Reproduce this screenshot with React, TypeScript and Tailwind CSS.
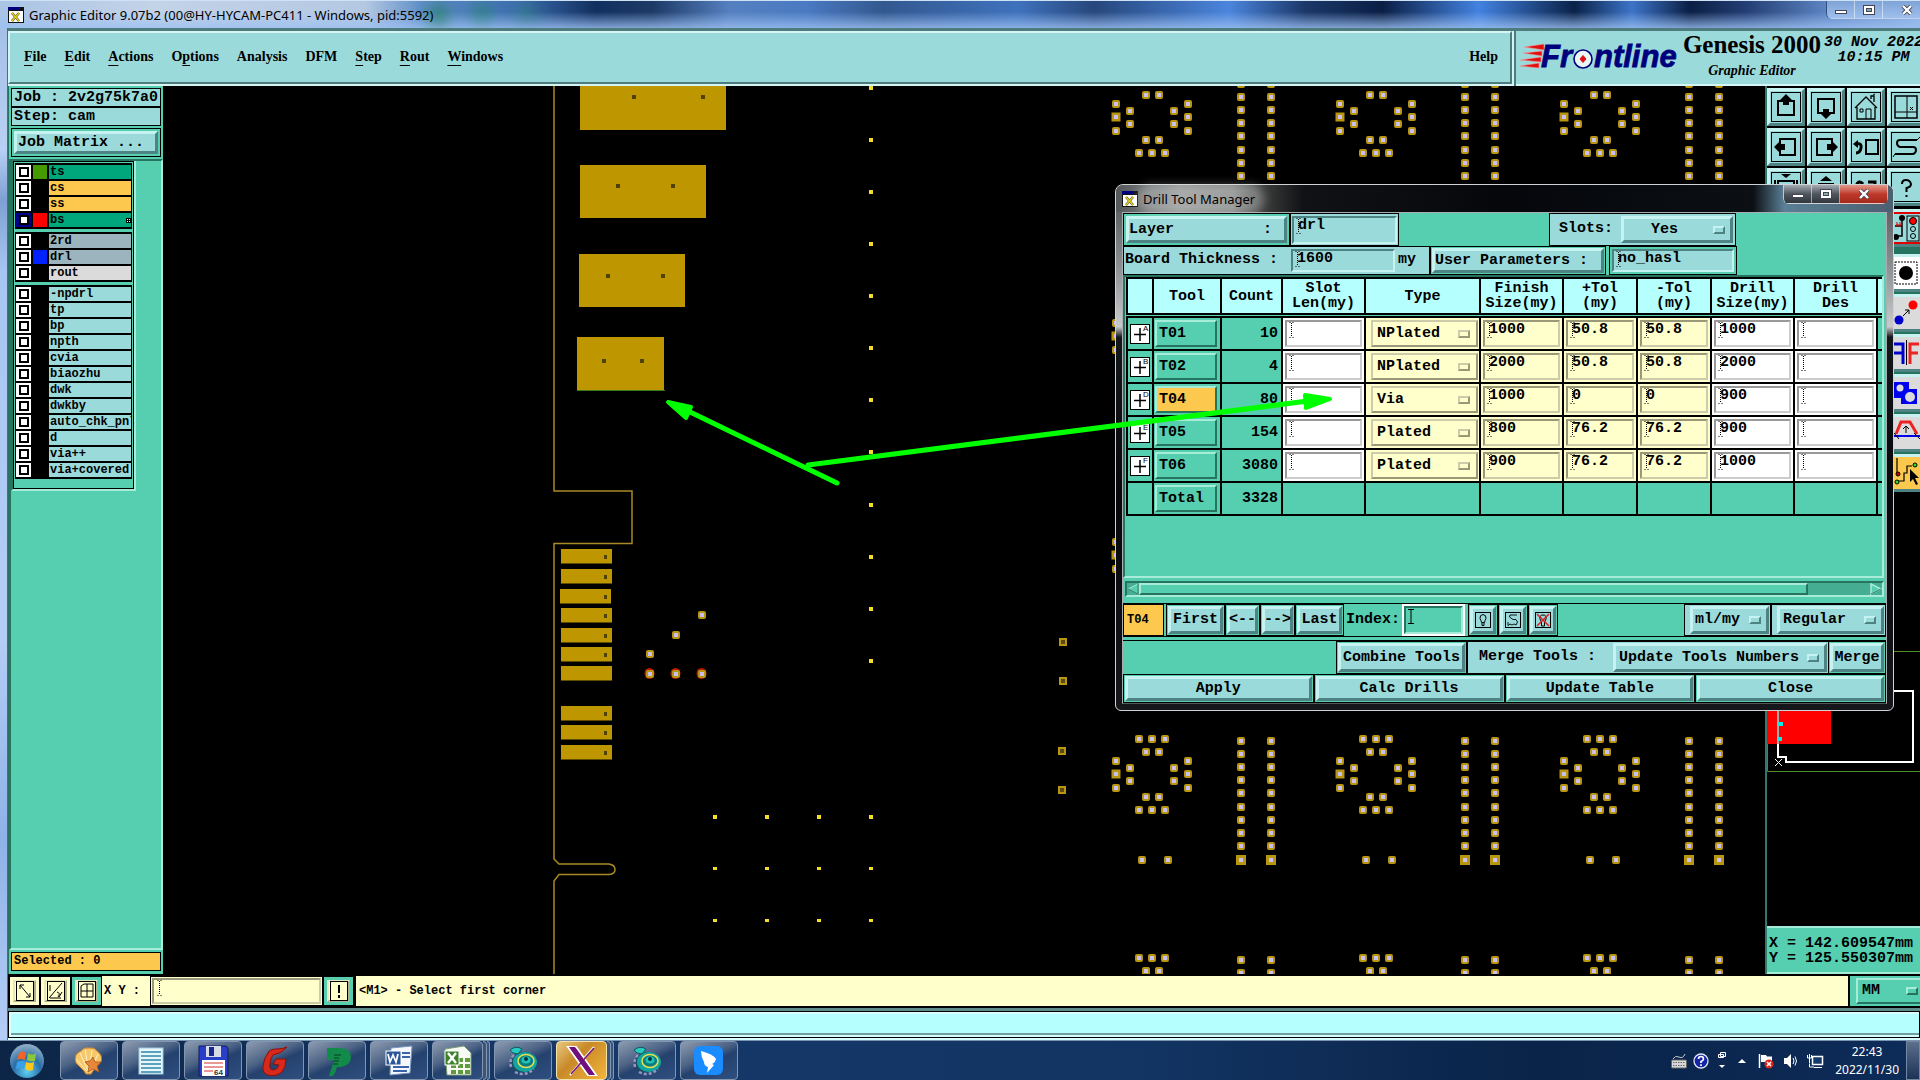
import type { ReactNode } from "react";

const MONO = "font-['Liberation_Mono','DejaVu_Sans_Mono',monospace] font-bold";
const SERIF = "font-['Liberation_Serif',serif] font-bold";
const UI = "font-['Noto_Sans','Open_Sans',sans-serif]";

const RAISED = "border-[3px] border-t-[#c6f3f2] border-l-[#c6f3f2] border-r-[#4d8483] border-b-[#4d8483] bg-[#9bdada]";
const TEAL_RAISED = "border-2 border-t-[#a6ecd9] border-l-[#a6ecd9] border-r-[#26735f] border-b-[#26735f]";
const TEAL_SUNKEN = "border-2 border-t-[#26735f] border-l-[#26735f] border-r-[#a6ecd9] border-b-[#a6ecd9]";

const MENUS = [
  ["", "F", "ile"],
  ["", "E", "dit"],
  ["", "A", "ctions"],
  ["O", "p", "tions"],
  ["Analysis", "", ""],
  ["DFM", "", ""],
  ["", "S", "tep"],
  ["", "R", "out"],
  ["", "W", "indows"],
];

type Layer = { name: string; bg: string; swatch?: string; active?: boolean };

const LAYERS: Layer[][] = [
  [
    { name: "ts", bg: "bg-[#00a67c]", swatch: "bg-[#459a00]" },
    { name: "cs", bg: "bg-[#fdc84e]" },
    { name: "ss", bg: "bg-[#fdc84e]" },
    { name: "bs", bg: "bg-[#00a67c]", swatch: "bg-[#ff0000]", active: true },
  ],
  [
    { name: "2rd", bg: "bg-[#9bb4be]" },
    { name: "drl", bg: "bg-[#9bb4be]", swatch: "bg-[#0022ff]" },
    { name: "rout", bg: "bg-[#dbdbdb]" },
  ],
  [
    "-npdrl", "tp", "bp", "npth", "cvia", "biaozhu", "dwk", "dwkby",
    "auto_chk_pnl", "d", "via++", "via+covered",
  ].map((name) => ({ name, bg: "bg-[#9bdada]" })),
];

const TOOLS = [
  { sym: "A", id: "T01", count: 10, type: "NPlated", finish: "1000", plus: "50.8", minus: "50.8", drill: "1000" },
  { sym: "B", id: "T02", count: 4, type: "NPlated", finish: "2000", plus: "50.8", minus: "50.8", drill: "2000" },
  { sym: "D", id: "T04", count: 80, type: "Via", finish: "1000", plus: "0", minus: "0", drill: "900" },
  { sym: "E", id: "T05", count: 154, type: "Plated", finish: "800", plus: "76.2", minus: "76.2", drill: "900" },
  { sym: "F", id: "T06", count: 3080, type: "Plated", finish: "900", plus: "76.2", minus: "76.2", drill: "1000" },
];

const HEADS = [
  ["Tool"], ["Count"], ["Slot", "Len(my)"], ["Type"], ["Finish", "Size(my)"],
  ["+Tol", "(my)"], ["-Tol", "(my)"], ["Drill", "Size(my)"], ["Drill", "Des"],
];

function IBeam() {
  return (
    <svg width="5" height="16" className="shrink-0" aria-hidden>
      <path d="M0.5 .5h1M3.5 .5h1M0.5 15.5h1M3.5 15.5h1" stroke="#000" />
      <path d="M2.5 1v14" stroke="#000" strokeDasharray="1 1" />
    </svg>
  );
}

function Field({ label, value = "", tone }: { label: string; value?: string; tone: "white" | "cream" | "cyan" }) {
  const look =
    tone === "white"
      ? "bg-white border-t-[#999] border-l-[#999] border-r-[#ccc] border-b-[#ccc]"
      : tone === "cream"
        ? "bg-[#ffffcc] border-t-[#99997a] border-l-[#99997a] border-r-[#ccccaa] border-b-[#ccccaa]"
        : "bg-[#9bdada] border-t-[#4d8483] border-l-[#4d8483] border-r-[#c6f3f2] border-b-[#c6f3f2]";
  return (
    <div className={`flex h-full w-full items-start border-2 pl-[2px] ${look}`}>
      <IBeam />
      <input
        aria-label={label}
        defaultValue={value}
        className={`${MONO} -ml-[3px] h-4 w-full min-w-0 bg-transparent text-[15px] leading-4 outline-none`}
      />
    </div>
  );
}

function Notch({ className = "" }: { className?: string }) {
  return <span className={`pointer-events-none absolute top-1/2 h-2 w-3 -translate-y-1/2 border-2 ${className}`} />;
}

function Menu({ label, value, className = "", pad = "pl-1" }: { label: string; value: string; className?: string; pad?: string }) {
  return (
    <div className={`relative ${className}`}>
      <select
        aria-label={label}
        defaultValue={value}
        className={`${MONO} ${RAISED} ${pad} block h-full w-full appearance-none rounded-none text-[15px] leading-4 outline-none`}
      >
        <option>{value}</option>
      </select>
      <Notch className="right-2 border-t-[#c6f3f2] border-l-[#c6f3f2] border-r-[#4d8483] border-b-[#4d8483]" />
    </div>
  );
}

function Btn({ children, className = "", align = "justify-center" }: { children: ReactNode; className?: string; align?: string }) {
  return (
    <div className={`border border-black bg-[#55cfb0] p-px ${className}`}>
      <button className={`${MONO} ${RAISED} ${align} flex h-full w-full items-center whitespace-nowrap text-[15px] leading-4`}>
        {children}
      </button>
    </div>
  );
}

function AppIcon() {
  return (
    <svg width="16" height="16" viewBox="0 0 16 16" className="shrink-0" aria-hidden>
      <rect width="16" height="16" fill="#111" />
      <rect width="11" height="3" fill="#00007c" />
      <rect x="1" y="4" width="14" height="11" fill="#fff" />
      <path d="M4 6l7 8M11 6l-7 8" stroke="#333" strokeWidth="2.4" />
      <path d="M4 6l7 8M11 6l-7 8" stroke="#e2d21c" strokeWidth="1.5" />
    </svg>
  );
}

function CaptionButtons({ dialog = false }: { dialog?: boolean }) {
  const h = dialog ? "h-[19px]" : "h-[18px]";
  const base = "flex items-center justify-center border-r border-b border-white/50 bg-gradient-to-b";
  const tone = dialog ? "from-[#a5adb4] via-[#50565d] to-[#31373d]" : "from-[#7fa3d6] to-[#9fc0ee]";
  return (
    <div className={`flex self-start overflow-hidden ${dialog ? "rounded-b-md border-l border-white/60" : "rounded-bl-md border-l border-[#32507c]"}`}>
      <button aria-label="Minimize" className={`${base} ${tone} ${h} w-7`}>
        <span className="mt-1 h-1 w-3 border border-[#445] bg-white" />
      </button>
      <button aria-label="Maximize" className={`${base} ${tone} ${h} w-7`}>
        <span className="flex h-[10px] w-3 items-center justify-center border border-[#445] bg-white">
          <span className="h-1 w-[6px] border border-[#445] bg-[#8aa]" />
        </span>
      </button>
      <button
        aria-label="Close window"
        className={`${base} ${h} w-12 ${dialog ? "from-[#e0988c] via-[#c0392b] to-[#a32a1c]" : tone}`}
      >
        <svg width="12" height="10" viewBox="0 0 12 10">
          <path d="M2 1l8 8M10 1L2 9" stroke="#445" strokeWidth="4" />
          <path d="M2 1l8 8M10 1L2 9" stroke="#fff" strokeWidth="2.4" />
        </svg>
      </button>
    </div>
  );
}

function TitleBar() {
  return (
    <div className="relative flex h-7 shrink-0 items-center overflow-hidden border-t border-[#cfe2f5] bg-[linear-gradient(90deg,#a9c4e4_0%,#c3d3e8_8%,#b4c8e2_19%,#5f8ec8_22%,#3d6db0_27%,#12305f_31%,#1d3a66_34%,#5580c0_38%,#4a7ac2_42%,#33588f_46%,#3f72bd_53%,#27477c_57%,#4b85dd_64%,#1b3768_68%,#0b1f45_72%,#4382e0_77%,#0a2248_82%,#3d74c8_85%,#0b1f45_88%,#243f75_91%,#5b82c0_95%,#8fb1e4_100%)] pl-2">
      <div className="absolute inset-0 bg-gradient-to-b from-transparent from-40% to-[#9cc0f2]/80" />
      <div className="absolute left-[428px] top-1 h-5 w-5 rounded-full bg-[#0d7a3a]/70 blur-sm" />
      <div className="absolute left-[472px] top-1 h-4 w-5 rounded-full bg-[#128a48]/60 blur-sm" />
      <div className="absolute left-[514px] top-1 h-4 w-6 rounded-full bg-[#2b8a6a]/50 blur-sm" />
      <div className="relative flex w-full items-center">
        <AppIcon />
        <h1 className={`${UI} ml-[5px] flex-1 text-[13px] leading-[22px] text-black`}>
          Graphic Editor 9.07b2 (00@HY-HYCAM-PC411 - Windows, pid:5592)
        </h1>
      </div>
      <div className="absolute -right-[11px] top-0">
        <CaptionButtons />
      </div>
    </div>
  );
}

function FrontlineLogo() {
  return (
    <svg width="162" height="36" viewBox="0 0 162 36" role="img" aria-label="Frontline">
      <g fill="#e01010" stroke="#f2a0a0" strokeWidth=".6">
        <path d="M4 7L24 4v6z" />
        <path d="M3 13L22 11v5z" />
        <path d="M0 20L21 17v5z" />
        <path d="M0 26L19 23v5z" />
      </g>
      <g className="font-['Liberation_Sans',sans-serif] text-[31px] font-bold italic" fill="#00007c" stroke="#00007c" strokeWidth=".8">
        <text x="21" y="27">Fr</text>
        <text x="74" y="27">ntline</text>
      </g>
      <circle cx="63" cy="19" r="9" fill="#e8f6f6" stroke="#00007c" strokeWidth="1.6" />
      <path d="M63 15.500l3 3.500-3 3.500-3-3.500z" fill="#e01010" stroke="#e01010" />
    </svg>
  );
}

function Header() {
  return (
    <header className="flex h-[58px] shrink-0 border-t-[3px] border-[#4e7c7c] bg-[#4e7c7c]">
      <div className="flex flex-1 border-r-2 border-b-2 border-[#d5f5f5]">
        <nav className={`${SERIF} flex flex-1 items-center gap-[18px] border-2 border-t-[#d5f5f5] border-l-[#d5f5f5] border-r-[#4e7c7c] border-b-[#4e7c7c] bg-[#9bdada] pr-3 pb-[2px] pl-[14px] text-sm`}>
          {MENUS.map(([a, u, b]) => (
            <button key={a + u + b} className="underline-offset-4">
              {a}
              <span className="underline decoration-1">{u}</span>
              {b}
            </button>
          ))}
          <button className="ml-auto">Help</button>
        </nav>
      </div>
      <div className="ml-[2px] flex w-[404px] overflow-hidden border-b-2 border-[#d5f5f5] bg-[#9bdada] pl-1">
        <div className="shrink-0 pt-[9px]">
          <FrontlineLogo />
        </div>
        <div className={`${SERIF} w-[140px] shrink-0 text-center`}>
          <div className="text-[25px] leading-7">Genesis 2000</div>
          <div className="text-sm leading-6 italic">Graphic Editor</div>
        </div>
        <div className={`${MONO} ml-[2px] shrink-0 pt-1 text-center text-[15px] leading-[15px] italic`}>
          <div>30 Nov 2022</div>
          <div>10:15 PM</div>
        </div>
      </div>
    </header>
  );
}

function LayerRow({ layer }: { layer: Layer }) {
  return (
    <label className="flex h-4 items-center gap-[2px]">
      <span className={`flex h-[14px] w-[15px] items-center justify-center ${layer.active ? "bg-[#00008c]" : "bg-white"}`}>
        <input type="checkbox" className="size-[10px] appearance-none border-2 border-black bg-white" />
      </span>
      <span className={`h-[14px] w-[14px] ${layer.swatch ?? "bg-black"}`} />
      <span className={`${MONO} ${layer.bg} flex h-[14px] flex-1 items-center overflow-hidden pl-px text-xs leading-[14px] whitespace-nowrap`}>
        {layer.name}
        {layer.active && (
          <svg width="5" height="5" className="ml-auto" aria-hidden>
            <path d="M0 0h5v5H0z" fill="#000" />
            <path d="M1 1h1v1H1zM3 1h1v1H3zM1 3h1v1H1zM3 3h1v1H3z" fill="#fff" />
          </svg>
        )}
      </span>
    </label>
  );
}

function Sidebar() {
  return (
    <aside className="flex w-[155px] shrink-0 flex-col border-l border-[#26735f] bg-[#55cfb0]">
      <div className={`${MONO} mx-[2px] mt-[2px] text-[15px] leading-[17px]`}>
        <div className="border border-black bg-[#9bdada] pl-[2px] whitespace-nowrap">Job : 2v2g75k7a0</div>
        <div className="border border-black bg-[#9bdada] pl-[2px]">Step: cam</div>
      </div>
      <div className="mx-[2px] mt-[2px] border border-black p-[2px]">
        <button className={`${MONO} ${RAISED} block h-[23px] w-full pl-px text-left text-[15px] leading-4`}>Job Matrix ...</button>
      </div>
      <div className={`${TEAL_SUNKEN} mt-[2px] flex-1`}>
        <div className="w-[125px] border-r-2 border-b-2 border-l-2 border-l-[#26735f] border-r-[#a6ecd9] border-b-[#a6ecd9]">
          <div className="flex flex-col gap-[3px] border border-black px-px pt-px pb-[9px]">
            {LAYERS.map((group, i) => (
              <div key={i} className="border border-black bg-black">
                {group.map((layer) => (
                  <LayerRow key={layer.name} layer={layer} />
                ))}
              </div>
            ))}
          </div>
        </div>
      </div>
      <div className={`${MONO} mx-[2px] mt-[2px] mb-[3px] border border-black bg-[#fdc84e] pl-[2px] text-xs leading-[17px]`}>
        Selected : 0
      </div>
    </aside>
  );
}

function Pad({ x, y, size = 8, halo = false }: { x: number; y: number; size?: number; halo?: boolean }) {
  return (
    <g>
      {halo && <ellipse cx={x - 0.5} cy={y - 0.5} rx="5" ry="5.500" fill="#c21800" />}
      <rect x={x - size / 2} y={y - size / 2} width={size} height={size} rx={size > 8 ? 0 : 2} fill="#b8960f" />
      <rect x={x - 2} y={y - 2} width="4" height="4" fill="#cabff2" />
    </g>
  );
}

const RING = [
  [1139, 739], [1152, 739], [1165, 739], [1146, 752], [1159, 752],
  [1116, 761], [1116, 788], [1130, 768], [1130, 781],
  [1174, 768], [1174, 781], [1188, 761], [1188, 774], [1188, 788],
  [1146, 797], [1159, 797], [1139, 810], [1152, 810], [1165, 810],
  [1142, 860], [1168, 860],
];
const COLUMN_Y = [741, 754, 767, 780, 793, 807, 820, 833, 846];

function Cluster() {
  return (
    <>
      {RING.map(([x, y]) => <Pad key={`${x}-${y}`} x={x} y={y} />)}
      <Pad x={1116} y={774} size={9} />
      {[1241, 1271].map((x) => (
        <g key={x}>
          {COLUMN_Y.map((y) => <Pad key={y} x={x} y={y} />)}
          <Pad x={x} y={860} size={10} />
        </g>
      ))}
    </>
  );
}

const BIG_PADS = [
  { x: 580, y: 80, w: 146, h: 50, holes: [[634, 97], [703, 97]] },
  { x: 580, y: 165, w: 126, h: 53, holes: [[618, 186], [673, 186]] },
  { x: 579, y: 254, w: 106, h: 53, holes: [[608, 276], [663, 276]] },
  { x: 577, y: 337, w: 87, h: 53, holes: [[604, 361], [642, 361]] },
];
const FINGERS = [549, 569, 589, 608, 628, 647, 666, 706, 725, 745];
const DOT_Y = [88, 140, 192, 244, 296, 348, 400, 452, 505, 557, 609, 661];

function Board() {
  return (
    <svg viewBox="163 86 1602 888" preserveAspectRatio="xMinYMin slice" className="absolute inset-0 h-full w-full" aria-hidden>
      <path
        d="M554 80V491H632V543.500H554V859L559 864H609Q615 865 615 869.500T609 874.500H559L554 881V980"
        fill="none"
        stroke="#a98a26"
        strokeWidth="1.500"
      />
      {BIG_PADS.map((p) => (
        <g key={p.y}>
          <rect x={p.x} y={p.y} width={p.w} height={p.h} fill="#be9700" />
          {p.holes.map(([x, y]) => <rect key={x} x={x - 2} y={y - 2} width="4" height="4" fill="#4f4208" />)}
        </g>
      ))}
      <path d="M577 390.500H665" stroke="#3c7a1e" />
      {FINGERS.map((y) => (
        <g key={y}>
          <rect x={y === 589 ? 560 : 561} y={y} width="51" height="14.500" fill="#be9700" />
          {y !== 666 && <rect x="604" y={y + 6} width="3" height="4" fill="#4f4208" />}
        </g>
      ))}
      {DOT_Y.map((y) => <rect key={y} x="869" y={y - 2} width="4" height="4" fill="#f2dc2e" />)}
      {[715, 767, 819, 871].map((x) =>
        [817, 869, 921].map((y) => <rect key={`${x}-${y}`} x={x - 2} y={y - 2} width="4" height={y === 817 ? 4 : 3} fill="#f2dc2e" />)
      )}
      <Pad x={702} y={615} />
      <Pad x={676} y={635} />
      <Pad x={650} y={654} />
      <Pad x={650} y={674} halo />
      <Pad x={676} y={674} halo />
      <Pad x={702} y={674} halo />
      {[[1063, 642], [1063, 681], [1062, 751], [1062, 790]].map(([x, y]) => (
        <g key={y}>
          <rect x={x - 4} y={y - 4} width="8" height="8" fill="#b8960f" />
          <rect x={x - 2} y={y - 2} width="4" height="4" fill="#5a4a18" />
        </g>
      ))}
      {[0, 224, 448].map((dx) =>
        [-657, -438, -219, 0, 219].map((dy) => (
          <g key={`${dx}${dy}`} transform={`translate(${dx} ${dy})`}>
            <Cluster />
          </g>
        ))
      )}
    </svg>
  );
}

function ToolIcon({ children, bg = "bg-[#9bdada]", frame = true, label }: { children?: ReactNode; bg?: string; frame?: boolean; label: string }) {
  return (
    <button
      aria-label={label}
      className={`size-[38px] shrink-0 border-[3px] border-t-[#c6f3f2] border-l-[#c6f3f2] border-r-[#4d8483] border-b-[#4d8483] ${bg}`}
    >
      <svg width="32" height="32" viewBox="3 3 32 32" fill="none" stroke="#000" strokeWidth="2">
        {frame && <rect x="4.500" y="4.500" width="29" height="29" strokeWidth="1" />}
        {children}
      </svg>
    </button>
  );
}

const SIDE_ICONS = [
  {
    label: "Move",
    bg: "bg-[#dbdbdb]",
    art: (
      <>
        <circle cx="12" cy="26" r="4.500" fill="#00c" stroke="none" />
        <circle cx="26" cy="11" r="4.500" fill="#f00" stroke="none" />
        <path d="M16 22l6-6M18 16h4v4" strokeWidth="1" />
      </>
    ),
  },
  {
    label: "Mirror",
    bg: "bg-[#dbdbdb]",
    art: (
      <>
        <path d="M7 10H16V30M7 19H16" stroke="#00c" strokeWidth="3" />
        <path d="M19.500 6V31" strokeWidth="1" />
        <path d="M32 10H23V30M23 19H31" stroke="#e22" strokeWidth="3" />
      </>
    ),
  },
  {
    label: "Shapes",
    bg: "bg-[#dbdbdb]",
    art: (
      <>
        <path d="M6 8H22V15H30V30H14V24H6Z" fill="#00e" stroke="none" />
        <circle cx="13" cy="14" r="3.500" fill="#dbdbdb" stroke="none" />
        <circle cx="23" cy="23" r="5" fill="#dbdbdb" stroke="none" />
      </>
    ),
  },
  {
    label: "Stretch",
    bg: "bg-[#dbdbdb]",
    art: (
      <>
        <path d="M9 20L14 8H23L30 20" stroke="#e22" strokeWidth="3" />
        <path d="M4 22H34" stroke="#00e" />
        <path d="M19 19V12M16 15l3-3 3 3" strokeWidth="1" />
        <path d="M7 19l5 6M27 19l6 6" strokeWidth="1" />
      </>
    ),
  },
  {
    label: "Select",
    bg: "bg-[#fdc84e]",
    art: (
      <>
        <path d="M10 4V19M10 27H17V19H20V12H25" strokeWidth="1.200" />
        <circle cx="11" cy="20" r="2" fill="#c00" strokeWidth="1" />
        <circle cx="10" cy="28" r="2" fill="#3d3" strokeWidth="1" />
        <circle cx="28" cy="11" r="2" fill="#3d3" strokeWidth="1" />
        <path d="M23 15v13l3-3 3 6 2-1-3-6h4z" fill="#000" stroke="none" />
      </>
    ),
  },
];

function RightPanel() {
  return (
    <aside className="relative flex w-[155px] shrink-0 flex-col overflow-hidden border-l-2 border-[#2f7a6a] bg-black">
      <div className="flex w-[158px] flex-col gap-[3px] pt-[2px]">
        <div className="grid grid-cols-4 gap-[2px]">
          <ToolIcon label="Pan up">
            <path d="M16 13H11V27H27V13H22" />
            <path d="M13 12l6-6 6 6h-3v5h-6v-5z" fill="#000" stroke="none" />
          </ToolIcon>
          <ToolIcon label="Pan down">
            <path d="M16 25H11V11H27V25H22" />
            <path d="M13 25l6 6 6-6h-3v-4h-6v4z" fill="#000" stroke="none" />
          </ToolIcon>
          <ToolIcon label="Home">
            <path d="M8 20L19 9L30 20M10 19V31H28V19M24 11V8H27V14" strokeWidth="1.300" />
            <path d="M19 31V21H24V31M13 21h3v3h-3zM26 7l2-1" strokeWidth="1" />
          </ToolIcon>
          <ToolIcon label="Window XY">
            <rect x="8" y="8" width="22" height="22" strokeWidth="1.500" />
            <path d="M20 8V30M8 24H30M23 19l3 3M26 19l-3 3" strokeWidth="1" />
          </ToolIcon>
          <ToolIcon label="Pan left">
            <path d="M13 16V11H28V27H13V22" />
            <path d="M13 13l-6 6 6 6v-3h5v-6h-5z" fill="#000" stroke="none" />
          </ToolIcon>
          <ToolIcon label="Pan right">
            <path d="M25 16V11H10V27H25V22" />
            <path d="M25 13l6 6-6 6v-3h-5v-6h5z" fill="#000" stroke="none" />
          </ToolIcon>
          <ToolIcon label="Previous view">
            <rect x="19" y="12" width="12" height="14" />
            <path d="M10 16Q15 15 14 20T9 25" strokeWidth="3" />
            <path d="M6 16l5-4v8z" fill="#000" stroke="none" />
          </ToolIcon>
          <ToolIcon label="Serpentine">
            <path d="M30 12H13Q10 12 10 15T13 19H26Q29 19 29 22T26 26H8" />
            <path d="M30 12l3-3M8 26l-2 3" strokeWidth="1" />
          </ToolIcon>
          <ToolIcon label="Zoom in">
            <path d="M11 28V13H27V28M8 12v6M30 12v6" />
            <path d="M14 6h10l-5 4z" fill="#000" stroke="none" />
          </ToolIcon>
          <ToolIcon label="Zoom out">
            <path d="M12 28V16H26V28" />
            <path d="M13 13h12l-6-5z" fill="#000" stroke="none" />
          </ToolIcon>
          <ToolIcon label="Redraw">
            <path d="M9 18Q12 11 16 16M21 14H28V24" strokeWidth="3" />
          </ToolIcon>
          <ToolIcon label="Help">
            <path d="M15 16Q15 12 19 12T24 16Q24 19 19.500 20V24" />
            <path d="M18.500 27h2v2h-2z" fill="#000" stroke="none" />
          </ToolIcon>
        </div>
        <div className="flex flex-col items-end gap-[2px] bg-[#26735f]">
          <ToolIcon label="Colors" frame={false}>
            <path d="M3 4H35M3 34H35" stroke="#e00000" />
            <path d="M15 8v19H8M8 17h7" strokeWidth="1.500" />
            <circle cx="15" cy="9" r="2" fill="#000" />
            <circle cx="9" cy="28" r="2" fill="#000" />
            <path d="M9 16h6M10 13v5M13 13v5" stroke="#e00000" strokeWidth="1" />
            <rect x="20" y="7" width="12" height="25" strokeWidth="1" />
            <circle cx="26" cy="12" r="3.500" fill="#f00" strokeWidth="1" />
            <circle cx="26" cy="20" r="2.500" strokeWidth="1" />
            <circle cx="26" cy="27" r="2.500" strokeWidth="1" />
          </ToolIcon>
          <div className="h-[3px]" />
          <ToolIcon label="Pad" bg="bg-white" frame={false}>
            <rect x="8" y="8" width="22" height="22" strokeWidth="1" strokeDasharray="2 1" />
            <circle cx="19" cy="19" r="7" fill="#000" stroke="none" />
          </ToolIcon>
          {SIDE_ICONS.map((icon) => (
            <ToolIcon key={icon.label} label={icon.label} bg={icon.bg} frame={false}>
              {icon.art}
            </ToolIcon>
          ))}
        </div>
      </div>
      <div className="min-h-0 flex-1">
        <svg width="153" height="430" viewBox="1767 492 153 430" className="block max-h-full" preserveAspectRatio="xMinYMin slice" aria-hidden>
          <path d="M1920 651.500H1767.500V771.500H1920" fill="none" stroke="#4c8a22" />
          <rect x="1767" y="690" width="64" height="54" fill="#f00" />
          <path d="M1778 744V691H1913V762H1786V757H1778V743" fill="none" stroke="#fff" strokeWidth="2" />
          <path d="M1778 692V744" stroke="#aaa" strokeWidth="2" />
          <path d="M1778 722h5v4h-5zM1778 737h4v4h-4z" fill="#10e8e8" />
          <path d="M1775 759l7 7M1782 759l-7 7" stroke="#fff" />
        </svg>
      </div>
      <div className={`${MONO} shrink-0 border-y-2 border-[#a6ecd9] bg-[#55cfb0] pt-2 pb-[6px] pl-[2px] text-[15px] leading-[15px] whitespace-pre`}>
        <div>X = 142.609547mm</div>
        <div>Y = 125.550307mm</div>
      </div>
    </aside>
  );
}

function DrillTable() {
  const cell = "border-2 border-black p-0";
  return (
    <table className={`${MONO} w-full table-fixed border-collapse text-[15px] leading-[15px]`}>
      <colgroup>
        <col className="w-[26px]" />
        <col className="w-[68px]" />
        <col className="w-[61px]" />
        <col className="w-[83px]" />
        <col className="w-[115px]" />
        <col className="w-[83px]" />
        <col className="w-[74px]" />
        <col className="w-[74px]" />
        <col className="w-[83px]" />
        <col className="w-[83px]" />
        <col />
      </colgroup>
      <thead>
        <tr className="h-9 bg-[#b5fffe]">
          <th className={cell} />
          {HEADS.map((lines) => (
            <th key={lines.join(" ")} className={`${cell} font-bold`}>
              {lines.map((l) => <div key={l}>{l}</div>)}
            </th>
          ))}
          <th className={`${cell} overflow-hidden border-r-0`} />
        </tr>
      </thead>
      <tbody>
        <tr className="h-[3px]">
          <td colSpan={11} className="p-0 text-[0px] leading-0" />
        </tr>
        {TOOLS.map((t) => (
          <tr key={t.id} className="h-[33px]">
            <td className={cell}>
              <svg width="20" height="20" viewBox="0 0 20 20" className="mx-auto" aria-hidden>
                <rect x=".5" y=".5" width="19" height="19" fill="#fff" stroke="#000" />
                <path d="M10 4V17M4 10.500H16" stroke="#000" strokeWidth="1.500" />
                <text x="13" y="7" fontSize="8" className="font-['Liberation_Sans',sans-serif] font-normal">{t.sym}</text>
              </svg>
            </td>
            <td className={cell}>
              <button className={`${TEAL_RAISED} ml-px block h-[27px] w-[62px] pl-[2px] text-left ${t.id === "T04" ? "bg-[#fdc84e]" : ""}`}>
                {t.id}
              </button>
            </td>
            <td className={`${cell} pr-[3px] text-right`}>{t.count}</td>
            <td className={`${cell} bg-white`}>
              <div className="h-[31px] p-[2px]"><Field tone="white" label={`${t.id} slot length`} /></div>
            </td>
            <td className={`${cell} bg-[#ffffcc]`}>
              <div className="relative h-[31px] py-[2px] pr-px pl-[5px]">
                <select
                  aria-label={`${t.id} type`}
                  defaultValue={t.type}
                  className="h-full w-full appearance-none rounded-none border-2 border-t-[#ccccaa] border-l-[#ccccaa] border-r-[#99997a] border-b-[#99997a] pl-1 outline-none"
                >
                  <option>{t.type}</option>
                </select>
                <Notch className="right-[9px] border-t-[#ccccaa] border-l-[#ccccaa] border-r-[#99997a] border-b-[#99997a]" />
              </div>
            </td>
            {([["finish size", t.finish], ["plus tolerance", t.plus], ["minus tolerance", t.minus]] as const).map(([label, v]) => (
              <td key={label} className={`${cell} bg-[#ffffcc]`}>
                <div className="h-[31px] p-[2px]"><Field tone="cream" label={`${t.id} ${label}`} value={v} /></div>
              </td>
            ))}
            {([["drill size", t.drill], ["drill designation", ""]] as const).map(([label, v]) => (
              <td key={label} className={`${cell} bg-white`}>
                <div className="h-[31px] p-[2px]"><Field tone="white" label={`${t.id} ${label}`} value={v} /></div>
              </td>
            ))}
            <td className={`${cell} border-r-0`} />
          </tr>
        ))}
        <tr className="h-[33px]">
          <td className={cell} />
          <td className={cell}>
            <button className={`${TEAL_RAISED} ml-px block h-[27px] w-[62px] pl-[2px] text-left`}>Total</button>
          </td>
          <td className={`${cell} pr-[3px] text-right`}>3328</td>
          {[0, 1, 2, 3, 4, 5, 6].map((i) => <td key={i} className={cell} />)}
          <td className={`${cell} border-r-0`} />
        </tr>
      </tbody>
    </table>
  );
}

function SmallIcon({ label, children }: { label: string; children: ReactNode }) {
  return (
    <div className="w-[30px] border border-black bg-[#55cfb0] p-px">
      <button aria-label={label} className={`${RAISED} flex h-full w-full items-center justify-center`}>
        <svg width="16" height="16" viewBox="0 0 16 16" fill="none" stroke="#000">
          <rect x=".5" y=".5" width="15" height="15" />
          {children}
        </svg>
      </button>
    </div>
  );
}

function DrillToolManager() {
  return (
    <section
      aria-label="Drill Tool Manager"
      className="absolute top-[184px] left-[1115px] w-[779px] rounded-t-lg rounded-b-md border border-[#d0d3d6] bg-[linear-gradient(180deg,#4a4d50_0%,#8a8d90_15%,#c8cacc_27%,#15181b_29%,#05070a_60%,#15171a_100%)] px-[6px] pb-[6px]"
    >
      <div className="-mx-[6px] flex h-[27px] items-center rounded-t-lg bg-[linear-gradient(90deg,#55585a_0%,#8c8f8e_8%,#7d807f_15%,#3c3d3c_19%,#101215_24%,#05070b_50%,#0c0f14_82%,#5a7f96_86%,#4c5f70_100%)] pr-[5px] pl-[6px]">
        <AppIcon />
        <h2 className={`${UI} ml-[5px] flex-1 text-[13px] leading-5 text-black`}>
          <span className="rounded-full bg-white/25 pr-1 shadow-[0_0_8px_6px_rgba(255,255,255,0.25)]">Drill Tool Manager</span>
        </h2>
        <CaptionButtons dialog />
      </div>
      <div className="border border-[#a9aeb2] border-b-[#55585b] bg-[#55cfb0]">
        <div className="flex h-[33px]">
          <div className="w-[167px] border border-black p-[2px]">
            <button className={`${MONO} ${RAISED} flex h-full w-full items-center justify-between pr-3 text-[15px] leading-4`}>
              <span>Layer</span>
              <span>:</span>
            </button>
          </div>
          <div className="w-[109px] border border-black bg-[#9bdada] p-px pt-[2px]">
            <Field tone="cyan" label="Layer" value="drl" />
          </div>
          <div className={`${MONO} ml-[150px] flex w-[187px] items-center border border-black bg-[#9bdada] py-[2px] pr-[2px] pl-[9px] text-[15px]`}>
            Slots:
            <Menu label="Slots" value="Yes" pad="pl-[27px]" className="ml-2 h-full flex-1" />
          </div>
        </div>
        <div className={`${MONO} flex h-[29px] text-[15px]`}>
          <div className="flex w-[307px] items-center border border-black bg-[#9bdada] py-[2px] pl-px whitespace-pre">
            Board Thickness :
            <div className="ml-[13px] h-full w-[104px]">
              <Field tone="cyan" label="Board Thickness" value="1600" />
            </div>
            <span className="ml-[3px]">my</span>
          </div>
          <Btn className="w-[176px]" align="justify-start">User Parameters :</Btn>
          <div className="ml-[3px] w-[128px] border border-black p-[2px]">
            <Field tone="cyan" label="User Parameters" value="no_hasl" />
          </div>
        </div>
        <div className={`${TEAL_SUNKEN} mr-[2px] h-[303px] pl-px`}>
          <DrillTable />
        </div>
        <div className={`${TEAL_SUNKEN} mx-[2px] mt-[3px] flex h-4 items-center bg-[#45ad92]`}>
          <svg width="12" height="12" viewBox="0 0 12 12" aria-hidden>
            <path d="M11 1L1 6l10 5z" fill="#55cfb0" stroke="#a6ecd9" />
            <path d="M1 6l10 5V1" fill="none" stroke="#26735f" />
          </svg>
          <div className={`${TEAL_RAISED} h-3 w-[669px] bg-[#55cfb0]`} />
          <svg width="12" height="12" viewBox="0 0 12 12" className="ml-auto" aria-hidden>
            <path d="M1 1l10 5L1 11z" fill="#55cfb0" stroke="#a6ecd9" strokeWidth="1.500" />
            <path d="M11 6L1 11" stroke="#26735f" />
          </svg>
        </div>
        <div className={`${MONO} mt-[6px] flex h-[34px] border-y border-black text-[15px]`}>
          <div className="flex w-[41px] items-center border border-black bg-[#fdc84e] pl-[3px] text-xs">T04</div>
          <Btn className="ml-[2px] w-[59px]">First</Btn>
          <Btn className="w-[35px]">{"<--"}</Btn>
          <Btn className="w-[35px]">{"-->"}</Btn>
          <Btn className="w-[49px]">Last</Btn>
          <label htmlFor="tool-index" className="flex items-center px-[2px]">Index:</label>
          <div className="flex w-[63px] items-start border-2 border-white">
            <div className="flex h-full w-full border-2 border-t-[#26735f] border-l-[#26735f] border-r-[#a6ecd9] border-b-[#a6ecd9] pl-[2px]">
              <svg width="6" height="16" className="shrink-0" aria-hidden>
                <path d="M0 1.500h6M0 15.500h6M3 1v14" stroke="#000" />
              </svg>
              <input id="tool-index" className="w-full min-w-0 bg-transparent outline-none" />
            </div>
          </div>
          <div className="w-[3px]" />
          <SmallIcon label="Highlight tool">
            <path d="M8 2.500Q11.500 3 11 6.500Q10 8 9.500 10.500H6.500Q6 8 5 6.500Q4.500 3 8 2.500M7 11v2.500h2V11" />
          </SmallIcon>
          <SmallIcon label="Select tool">
            <path d="M12 3H5L4.500 5L8 7.500H11L12.500 10L11 13L9 12L7 13L5 12L3 13.500V10" strokeWidth=".9" />
          </SmallIcon>
          <SmallIcon label="Clear highlight">
            <path d="M8 3Q12 3 11 7L9.500 10V14H6.500V10L5 7Q4 3 8 3" />
            <path d="M2 2L14 14M14 2L2 14" stroke="#e02020" strokeWidth="1.500" />
          </SmallIcon>
          <div className="flex-1" />
          <div className="w-[87px] border border-black bg-[#9bdada] py-px pr-px pl-[5px]">
            <Menu label="Units" value="ml/my" className="h-full" pad="pl-[2px]" />
          </div>
          <div className="w-[115px] border border-black bg-[#9bdada] py-px pr-px pl-[5px]">
            <Menu label="Mode" value="Regular" className="h-full" pad="pl-[3px]" />
          </div>
        </div>
        <div className={`${MONO} mt-[3px] flex h-[34px] border-t border-black text-[15px]`}>
          <div className="flex-1" />
          <Btn className="w-[131px]">Combine Tools</Btn>
          <div className="flex w-[361px] items-center border-y border-l border-black bg-[#9bdada] py-px pr-px pl-[11px] whitespace-pre">
            Merge Tools :
            <Menu label="Merge Tools" value="Update Tools Numbers" className="ml-auto h-full w-[214px]" pad="pl-[3px]" />
          </div>
          <Btn className="w-[58px]">Merge</Btn>
        </div>
        <div className="flex h-[29px]">
          <Btn className="flex-1">Apply</Btn>
          <Btn className="flex-1">Calc Drills</Btn>
          <Btn className="flex-1">Update Table</Btn>
          <Btn className="flex-1">Close</Btn>
        </div>
      </div>
    </section>
  );
}

function Arrows() {
  return (
    <svg width="1920" height="1080" viewBox="0 0 1920 1080" className="pointer-events-none absolute top-0 left-0" aria-hidden>
      <g stroke="#00ff00" strokeWidth="5" strokeLinecap="round" strokeLinejoin="round" fill="#00ff00">
        <path d="M837 483L690 412" />
        <path d="M808 465L1308 401" />
        <path d="M668 402L691 407L686 418Z" strokeWidth="4" />
        <path d="M1330 399L1305 395L1306 408Z" strokeWidth="4" />
      </g>
    </svg>
  );
}

function StatusButton({ label, teal = false, children }: { label: string; teal?: boolean; children: ReactNode }) {
  return (
    <div className={`w-[31px] border border-black p-[3px] ${teal ? "bg-[#55cfb0]" : "bg-[#ffffcc]"}`}>
      <button
        aria-label={label}
        className="flex h-full w-full items-center justify-center border-2 border-t-[#e8e8bc] border-l-[#e8e8bc] border-r-[#b0b08c] border-b-[#b0b08c] bg-[#ffffcc]"
      >
        <svg width="18" height="20" viewBox="0 0 18 20" fill="none" stroke="#000">
          <rect x=".5" y=".5" width="17" height="19" />
          {children}
        </svg>
      </button>
    </div>
  );
}

function StatusBar() {
  return (
    <footer className={`${MONO} shrink-0 text-xs`}>
      <div className="flex h-[34px] border-y-2 border-black bg-[#ffffcc]">
        <div className="w-px bg-black" />
        <StatusButton label="Absolute coordinates">
          <path d="M4 4L14 16M4 8V4H8M14 12V16H10" />
        </StatusButton>
        <StatusButton label="Polar coordinates">
          <path d="M2 17L15 2M3 4V10M3 17H14M10 11Q14 12 11 16M15 11L12 16" />
        </StatusButton>
        <StatusButton label="Grid" teal>
          <path d="M3 16V5L6 3H15V16H3M9 3V16M3 10H15" />
        </StatusButton>
        <label htmlFor="xy" className="flex w-12 items-center pl-[2px] whitespace-nowrap">X Y :</label>
        <div className="flex w-[173px] border border-black p-px">
          <div className="flex w-full border-2 border-[#99997a] border-r-[#ccccaa] border-b-[#ccccaa] pl-[3px]">
            <IBeam />
            <input id="xy" className="w-full min-w-0 bg-transparent outline-none" />
          </div>
        </div>
        <StatusButton label="Interrupt" teal>
          <path d="M9 4V12M9 14V17" strokeWidth="2" />
        </StatusButton>
        <div className="flex flex-1 items-center border-l-2 border-black pl-[3px] whitespace-pre">{"<M1> - Select first corner"}</div>
        <div className="w-[72px] overflow-hidden border-l-2 border-black bg-[#55cfb0] py-[2px] pl-[6px]">
          <div className="relative h-full w-[68px]">
            <select aria-label="Units" defaultValue="MM" className={`${TEAL_RAISED} h-full w-full appearance-none rounded-none pl-1 text-[15px] outline-none`}>
              <option>MM</option>
            </select>
            <Notch className="right-[6px] border-t-[#a6ecd9] border-l-[#a6ecd9] border-r-[#26735f] border-b-[#26735f]" />
          </div>
        </div>
      </div>
      <div className="h-8 border-t-[3px] border-[#5f8b8b] bg-[#d8fffe]">
        <div className="h-[27px] border border-black bg-[#d8fffe] p-[2px] pr-0">
          <div className="h-full border-b-2 border-[#6fa09f] bg-[#b5fffe]" />
        </div>
      </div>
    </footer>
  );
}

const dbIcon = (
  <>
    <ellipse cx="17" cy="18" rx="13" ry="11" fill="#1b4f62" />
    <ellipse cx="18" cy="17" rx="12" ry="10" fill="#12a5a0" />
    <path d="M4 22Q2 12 9 9M8 27Q18 32 27 24" stroke="#9a93c8" strokeWidth="2.500" strokeDasharray="3 2" fill="none" />
    <ellipse cx="19" cy="16" rx="8" ry="6.500" fill="#0d7c80" stroke="#e8e050" strokeWidth="1.500" />
    <ellipse cx="19" cy="15" rx="4.500" ry="3.500" fill="#1cc4b8" />
    <ellipse cx="19" cy="14" rx="2" ry="2" fill="#0c3340" />
    <path d="M3 5Q9 0 15 4L11 9Q5 9 3 5" fill="#25c9bd" stroke="#0c5a60" />
  </>
);

const TASKS: { label: string; art: ReactNode; narrow?: boolean; active?: boolean }[] = [
  {
    label: "Shell",
    art: (
      <>
        <path d="M16 3Q21 2 24 6Q30 10 28 17L20 26L18 29H13L11 26L3 18Q0 9 8 6Q11 2 16 3" fill="#f7c86a" stroke="#c8812a" />
        <path d="M15 26L7 8M16 26L12 5M16 26L19 5M17 26L25 9M14 26L3 14" stroke="#fff0c8" />
        <path d="M20 12l2 5 6 0-4 4 2 6-6-3-5 3 1-6-4-4 5-1z" fill="#e8863a" stroke="#a85518" strokeWidth=".8" />
      </>
    ),
  },
  {
    label: "Notes",
    art: (
      <>
        <rect x="4" y="3" width="24" height="26" fill="#e8f6fc" stroke="#9cc8dc" />
        <path d="M6 7H26M6 11H26M6 15H26M6 19H26M6 23H26M6 27H26" stroke="#2c86a8" strokeWidth="1.600" />
      </>
    ),
  },
  {
    label: "Save 64",
    art: (
      <>
        <path d="M2 1H29L31 3V31H2Z" fill="#2a3fc8" stroke="#101a60" />
        <rect x="9" y="1" width="15" height="11" fill="#d8dce4" />
        <rect x="12" y="2" width="5" height="9" fill="#1a2890" />
        <rect x="5" y="15" width="23" height="16" fill="#fff" />
        <path d="M7 18H26M7 22H26M7 26H16" stroke="#d03030" />
        <text x="17" y="30" fontSize="8" fontWeight="bold" fontFamily="Liberation Sans" fill="#333">64</text>
      </>
    ),
  },
  {
    label: "G",
    art: <path d="M28 2Q22 9 14 10Q11 14 11 19Q10 25 14 25Q18 25 20 20L14 19L17 14H27Q27 22 23 27Q17 32 9 30Q3 28 4 21Q5 13 9 8Q10 4 18 4Q24 4 28 2Z" fill="#d82a1c" stroke="#8c1008" />,
  },
  {
    label: "P",
    art: (
      <>
        <path d="M6 3H20Q30 4 30 12T20 22H16Q15 27 12 31H8L13 15H6Z" fill="#128a4a" />
        <path d="M13 10H20M13 13H18M12 16H18M12 19H17" stroke="#0a5a30" strokeWidth="1.500" />
      </>
    ),
  },
  {
    label: "Word",
    art: (
      <>
        <path d="M8 3L29 1L27 28L7 30Z" fill="#f4f8fc" stroke="#7a96c0" />
        <path d="M19 8H27M19 12H27M10 22H26M10 26H24" stroke="#3a62a8" strokeWidth="2" />
        <rect x="3" y="6" width="15" height="14" fill="#2a569a" stroke="#fff" />
        <path d="M5 9L7 17L10 10L13 17L15 9" stroke="#fff" strokeWidth="1.800" fill="none" />
      </>
    ),
  },
  {
    label: "Excel",
    narrow: true,
    art: (
      <>
        <path d="M3 4L22 1L29 8V30H5Z" fill="#f6faf2" stroke="#7aa070" />
        <path d="M16 13h5v4h-5zM23 13h5v4h-5zM9 19h5v4H9zM16 19h5v4h-5zM23 19h5v4h-5zM9 25h5v4H9zM16 25h5v4h-5zM23 25h5v4h-5z" fill="#5f9a3e" />
        <rect x="3" y="6" width="14" height="14" fill="#3c8228" stroke="#fff" />
        <path d="M6 8L14 18M14 8L6 18" stroke="#fff" strokeWidth="2.400" />
      </>
    ),
  },
  { label: "Genesis", art: dbIcon },
  {
    label: "Exceed",
    narrow: true,
    active: true,
    art: (
      <>
        <path d="M2 2H10L30 30H22ZM28 2L4 30" fill="#70107c" stroke="#fff" strokeWidth="2" />
        <path d="M3 2H9L29 30H23Z" fill="#70107c" />
        <path d="M28 3L5 29" stroke="#70107c" strokeWidth="1.500" />
      </>
    ),
  },
  { label: "Genesis Editor", art: dbIcon },
  {
    label: "DingTalk",
    art: (
      <>
        <rect x="1" y="1" width="29" height="29" rx="6" fill="#1a8cff" />
        <path d="M8 6Q20 9 23 14Q22 18 19 19L21 20L14 28L15 22Q11 21 11 17Q8 12 8 6" fill="#fff" />
      </>
    ),
  },
];

function Taskbar() {
  return (
    <div className="flex h-10 shrink-0 items-stretch border-t border-[#7a93ae] bg-[linear-gradient(90deg,#0c2546_0%,#16396b_30%,#123462_60%,#0a2348_80%,#0d2c59_100%)]">
      <button aria-label="Start" className="w-[60px] pl-2">
        <svg width="38" height="38" viewBox="0 0 38 38">
          <defs>
            <radialGradient id="orb" cx="50%" cy="80%" r="80%">
              <stop offset="0" stopColor="#5fd0f2" />
              <stop offset=".5" stopColor="#2a6ea8" />
              <stop offset="1" stopColor="#9ab4c8" />
            </radialGradient>
          </defs>
          <circle cx="19" cy="19" r="17.500" fill="url(#orb)" stroke="#0a2040" />
          <path d="M11 11Q15 8 18 11L17 18Q13 16 9 18Z" fill="#f0642a" />
          <path d="M20 11Q24 14 28 11L27 19Q23 20 19 18Z" fill="#8cc63c" />
          <path d="M9 20Q13 18 17 20L16 27Q12 25 8 27Z" fill="#3aa0e8" />
          <path d="M18 20Q22 22 26 20L25 28Q21 30 17 27Z" fill="#fcc81e" />
        </svg>
      </button>
      <div className="flex gap-1">
        {TASKS.map((t) => (
          <div key={t.label} className="flex w-[58px]">
            <button
              aria-label={t.label}
              className={`flex flex-1 items-center justify-center rounded-sm border ${
                t.active
                  ? "border-[#f4e2a8] bg-[linear-gradient(135deg,#e8c880,#c88a28_40%,#f4b43c)]"
                  : "border-[#8296b0] bg-[linear-gradient(155deg,#8d9bb0_0%,#4d6486_40%,#25426e_55%,#2f4f80_100%)]"
              }`}
            >
              <svg width="32" height="32" viewBox="0 0 32 32" fill="none">{t.art}</svg>
            </button>
            {t.narrow && (
              <>
                <span className="w-1 rounded-r-sm border-y border-r border-[#8296b0] bg-[#3d5578]" />
                <span className="w-[3px] rounded-r-sm border-y border-r border-[#8296b0] bg-[#3d5578]" />
              </>
            )}
          </div>
        ))}
      </div>
      <div className="ml-auto flex items-center gap-2">
        <svg width="16" height="16" viewBox="0 0 16 16" aria-hidden>
          <path d="M2 6Q4 2 8 4T14 1" stroke="#ccc" fill="none" />
          <rect x=".5" y="7" width="15" height="8" rx="1" fill="#d8d8d8" stroke="#666" />
          <path d="M2 9.500H14M2 12.500H14" stroke="#666" strokeDasharray="1.500 1" />
        </svg>
        <svg width="16" height="16" viewBox="0 0 16 16" aria-hidden className="ml-[-2px]">
          <circle cx="8" cy="8" r="7" fill="#1424a8" stroke="#dfe6f4" strokeWidth="1.300" />
          <path d="M5.500 6Q5.500 3.500 8 3.500T10.500 6Q10.500 7.500 8 8.500V10M8 11.200V13" stroke="#fff" strokeWidth="1.700" fill="none" />
        </svg>
        <svg width="10" height="20" viewBox="0 0 10 20" aria-hidden>
          <path d="M3.500 1.500h5v4h-5zM1.500 3.500h5v3h-5z" stroke="#fff" fill="#16396b" />
          <path d="M2 14h6l-3 3z" fill="#fff" />
        </svg>
        <svg width="10" height="8" viewBox="0 0 10 8" aria-hidden className="mx-[2px]">
          <path d="M1 6h8L5 2z" fill="#fff" />
        </svg>
        <svg width="18" height="18" viewBox="0 0 18 18" aria-hidden>
          <path d="M2.500 2v14" stroke="#fff" strokeWidth="1.500" />
          <path d="M4 3h5l1 1.500h5V10H4z" fill="#fff" />
          <circle cx="12" cy="12" r="4.500" fill="#d8281c" />
          <path d="M10 10l4 4M14 10l-4 4" stroke="#fff" strokeWidth="1.500" />
        </svg>
        <svg width="16" height="16" viewBox="0 0 16 16" aria-hidden>
          <path d="M1 5h3l4-4v14l-4-4H1z" fill="#fff" />
          <path d="M10 5q2 3 0 6M12 3.500q3 4.500 0 9" stroke="#fff" fill="none" />
        </svg>
        <svg width="17" height="16" viewBox="0 0 17 16" aria-hidden>
          <rect x="5.500" y="3.500" width="10" height="8" fill="#16396b" stroke="#fff" strokeWidth="1.500" />
          <path d="M7 14.500h8M2.500 1v9M.5 2v3h4V2M2.500 10.500V14H7" stroke="#fff" fill="none" />
        </svg>
        <div className={`${UI} ml-[3px] -mr-px text-center text-xs leading-[18px] text-white`}>
          <div>22:43</div>
          <div>2022/11/30</div>
        </div>
        <div className="h-full w-[14px] border border-[#7486a0] bg-gradient-to-b from-[#5c6f8c] to-[#1c3358]" />
      </div>
    </div>
  );
}

export default function App() {
  return (
    <div className="relative flex h-screen w-full flex-col overflow-hidden bg-black text-black">
      <TitleBar />
      <div className="flex min-h-0 flex-1">
        <div className="w-2 shrink-0 border-r border-[#4e6c7c] bg-[linear-gradient(180deg,#a5c0e6_0%,#b8d0f4_12%,#7ea0d4_17%,#a8c6f2_24%,#b4cdf6_60%,#8fb2e8_80%,#b4cdf6_100%)]" />
        <div className="flex min-w-0 flex-1 flex-col">
          <Header />
          <div className="flex min-h-0 flex-1">
            <Sidebar />
            <main className="relative min-w-0 flex-1 overflow-hidden bg-black">
              <Board />
            </main>
            <RightPanel />
          </div>
          <StatusBar />
        </div>
      </div>
      <Taskbar />
      <DrillToolManager />
      <Arrows />
    </div>
  );
}
